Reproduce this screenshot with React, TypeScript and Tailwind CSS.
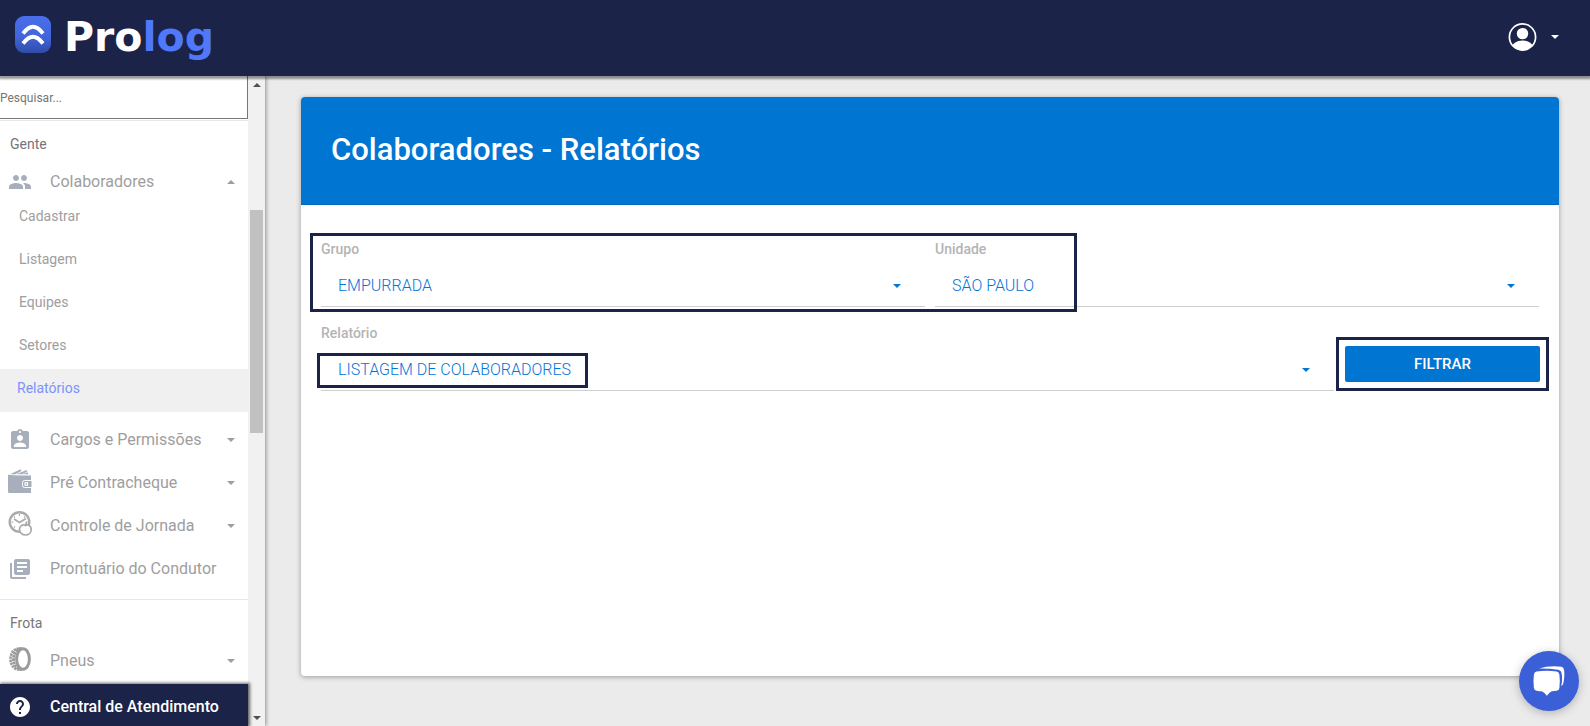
import type { ReactNode } from "react";
import { MdAssignmentInd, MdHelp, MdLibraryBooks, MdPeople } from "react-icons/md";

function Caret({ up = false, className = "" }: { up?: boolean; className?: string }) {
  return (
    <svg viewBox="0 0 8 4" className={`h-1 w-2 shrink-0 ${className}`} fill="currentColor" aria-hidden="true">
      {up ? <path d="M0 4 4 0l4 4z" /> : <path d="M0 0h8L4 4z" />}
    </svg>
  );
}

function LogoMark() {
  return (
    <svg viewBox="0 0 36 37" className="h-[37px] w-9" aria-hidden="true">
      <defs>
        <linearGradient id="mark" x1="0" y1="0" x2="0" y2="1">
          <stop offset="0" stopColor="#4a6fea" />
          <stop offset="0.55" stopColor="#4265dc" />
          <stop offset="1" stopColor="#304da8" />
        </linearGradient>
      </defs>
      <rect width="36" height="37" rx="9" fill="url(#mark)" />
      <g fill="none" stroke="#fff" strokeWidth="3.8">
        <path d="M8 17.500C15 8.500 21 8.500 28 17.500" />
        <path d="M8 27.500C15 18.500 21 18.500 28 27.500" />
      </g>
    </svg>
  );
}

function WalletIcon() {
  return (
    <svg viewBox="0 0 24 24" className="size-6" fill="#a7aebc" aria-hidden="true">
      <path d="M2 5.200 12.500 .3l1 1.700L7.500 5.200z" />
      <path d="M8.500 5.200 18.500 1l.8 1.500-5.300 2.700z" />
      <path d="M14.500 5.200 19.500 3.200l1 2z" />
      <path d="M0 5.500Q1 6.500 23 6.500V24H1.500Q0 24 0 22.500z" />
      <path d="M24 11.500h-7.500q-2 0-2 2v3q0 2 2 2H24z" stroke="#fff" />
      <rect x="16.500" y="13.200" width="3.600" height="3.600" fill="#fff" />
      <rect x="17.600" y="14.300" width="1.400" height="1.400" />
    </svg>
  );
}

function JourneyIcon() {
  return (
    <svg viewBox="0 0 24 25" className="h-[25px] w-6" fill="none" stroke="#ababab" aria-hidden="true">
      <circle cx="11.500" cy="11" r="9.800" strokeWidth="2.400" />
      <path d="M11.500 3v2M11.500 17v2M3.500 11h2M17.500 11h2M6 5.500l1 1M16 6.500l1-1M6 16.500l1-1" strokeWidth="1.200" />
      <path d="m6 8 5.500 3.500L18 7.500" strokeWidth="1.900" />
      <path d="M17.500 14.500c-2.500-1.500-6 0-6 4 0 3 2.500 5.500 6 5.500s5.700-2.500 5.700-5.500c0-4-3.200-5.500-5.700-4Z" fill="#fff" strokeWidth="1.700" />
      <path d="M17.500 14.500c0-1.500.5-2.500 1.500-3" strokeWidth="1.800" />
    </svg>
  );
}

function TireIcon() {
  return (
    <svg viewBox="0 0 22 24" className="ml-px h-6 w-[22px]" fill="none" stroke="#9b9b9b" aria-hidden="true">
      <path d="M13 1.500h-3C5 1.500 1.500 6 1.500 12s3.500 10.500 8.500 10.500h3" strokeWidth="2.600" strokeDasharray="2.300 .8" />
      <path d="M12 1.500C7.500 2.500 4.500 6.500 4.500 12s3 9.500 7.500 10.500" strokeWidth="3" strokeDasharray="2.700 .6" />
      <ellipse cx="14" cy="12" rx="6.400" ry="10.300" fill="#fff" strokeWidth="3" />
    </svg>
  );
}

function AccountIcon() {
  return (
    <svg viewBox="0 0 29 28" className="h-7 w-[29px]" aria-hidden="true">
      <defs>
        <clipPath id="disc">
          <circle cx="14.500" cy="14" r="13.500" />
        </clipPath>
      </defs>
      <circle cx="14.500" cy="14" r="13.100" fill="none" stroke="#fff" strokeWidth="1.700" />
      <circle cx="14.500" cy="10.600" r="5.700" fill="#fff" />
      <ellipse cx="14.500" cy="25" rx="11" ry="7.500" fill="#fff" clipPath="url(#disc)" />
    </svg>
  );
}

function ChatIcon() {
  return (
    <svg viewBox="0 0 32 30" className="h-[30px] w-8" aria-hidden="true">
      <path d="M6 2.600Q16-.6 28.500 .8q2.200.4 2.600 3.200.8 7-.8 13.500-.4 1.700-2 2.500 1.400-7 .3-12.500-.5-3.300-3.500-3.800Q16 2.500 6 2.600Z" fill="#fff" />
      <path d="M3.500 5.400q10-1.400 20.200 0 2.300.4 2.700 3 .9 7 0 13.600-.4 2.400-2.700 2.800-2.200.4-5 .5-2 .6-4.800 4.500Q11 26 8.700 25.300q-2.800 0-5-.5Q1.300 24.400.9 22 0 15.500.9 8.400q.4-2.600 2.600-3Z" fill="#fff" />
    </svg>
  );
}

function MenuRow({ icon, label, caret, tall = true }: { icon: ReactNode; label: string; caret?: "up" | "down"; tall?: boolean }) {
  return (
    <button type="button" className={`flex w-full items-center pr-[13px] pl-2 text-left text-base text-[#9e9e9e] ${tall ? "h-[43px]" : "h-[30px]"}`}>
      <span className="flex w-[42px] items-center text-[#a7aebc]">{icon}</span>
      <span className="flex-1">{label}</span>
      {caret && <Caret up={caret === "up"} />}
    </button>
  );
}

function Section({ title }: { title: string }) {
  return <h2 className="flex h-[46px] items-center pl-[10px] text-sm text-[#757575]">{title}</h2>;
}

function Field({ id, label, value, children }: { id: string; label: string; value: string; children?: ReactNode }) {
  return (
    <div className="min-w-0">
      <label htmlFor={id} className="block text-sm leading-5 font-medium text-[#b4b4b4]">
        {label}
      </label>
      <div className="relative mt-[6px] flex h-[42px] items-center border-b border-[#cfcfcf]">
        <select id={id} className="h-full w-full appearance-none bg-transparent pr-12 pl-[17px] text-base font-light text-[#0275d8] outline-none">
          <option>{value}</option>
        </select>
        <Caret className="pointer-events-none absolute right-6 text-[#0075d1]" />
        {children}
      </div>
    </div>
  );
}

const pages = ["Cadastrar", "Listagem", "Equipes", "Setores"];

export default function App() {
  return (
    <div className="flex h-screen flex-col overflow-hidden bg-[#ebebeb] font-[Roboto,sans-serif]">
      <header className="z-20 flex h-[76px] shrink-0 items-center justify-between bg-[#1b2349] pr-[31px] pl-[15px] shadow-[0_2px_2px_1px_rgba(0,0,0,0.4)]">
        <a href="#" className="flex items-center gap-[13px] pb-[7px]">
          <LogoMark />
          <span className="pt-1 font-[DejaVu_Sans,sans-serif] text-[41px] leading-[48px] font-bold text-white">
            Pro<span className="text-[#5078fa]">log</span>
          </span>
        </a>
        <button type="button" aria-label="Conta" className="flex items-center gap-[14px] pb-0.5 text-white">
          <AccountIcon />
          <Caret />
        </button>
      </header>

      <div className="flex min-h-0 flex-1">
        <aside className="z-10 flex w-[265px] shrink-0 bg-white shadow-[1px_0_4px_rgba(0,0,0,0.4)]">
          <div className="flex min-w-0 flex-1 flex-col">
            <div className="min-h-0 flex-1 overflow-hidden">
              <input
                type="search"
                aria-label="Pesquisar"
                placeholder="Pesquisar..."
                className="block h-[43px] w-full border-r border-b border-[#767676] pt-0.5 text-xs outline-none placeholder:text-[#757575]"
              />
              <nav className="mt-px border-t border-[#e8e8e8]">
                <Section title="Gente" />
                <MenuRow tall={false} icon={<MdPeople size={24} />} label="Colaboradores" caret="up" />
                <ul className="text-sm text-[#9e9e9e]">
                  {pages.map((page) => (
                    <li key={page}>
                      <a href="#" className="flex h-[43px] items-center pb-[6px] pl-[19px]">
                        {page}
                      </a>
                    </li>
                  ))}
                  <li>
                    <a href="#" className="flex h-[43px] items-center bg-[#f0f0f0] pb-[6px] pl-[17px] text-[#7b93fb]">
                      Relatórios
                    </a>
                  </li>
                </ul>
                <div className="mt-[6px] border-b border-[#e8e8e8] pb-[9px]">
                  <MenuRow icon={<MdAssignmentInd size={24} />} label="Cargos e Permissões" caret="down" />
                  <MenuRow icon={<span className="pb-1"><WalletIcon /></span>} label="Pré Contracheque" caret="down" />
                  <MenuRow icon={<span className="pb-1"><JourneyIcon /></span>} label="Controle de Jornada" caret="down" />
                  <MenuRow icon={<MdLibraryBooks size={24} />} label="Prontuário do Condutor" />
                </div>
                <Section title="Frota" />
                <MenuRow tall={false} icon={<span className="pb-1"><TireIcon /></span>} label="Pneus" caret="down" />
              </nav>
            </div>
            <a href="#" className="z-10 flex h-[42px] shrink-0 items-center bg-[#1b2349] pt-1 pl-2 text-base font-medium text-white shadow-[1px_0_3px_1px_rgba(0,0,0,0.6)]">
              <span className="w-[42px]">
                <MdHelp size={24} />
              </span>
              Central de Atendimento
            </a>
          </div>
          <div className="flex w-[17px] shrink-0 flex-col items-center bg-[#f1f1f1] pt-[7px] pb-[6px] text-[#505050]">
            <Caret up />
            <div className="flex min-h-0 w-full flex-1 flex-col items-center pt-[123px]">
              <div className="h-[223px] w-[13px] bg-[#c1c1c1]" />
            </div>
            <Caret />
          </div>
        </aside>

        <main className="flex min-w-0 flex-1 flex-col pt-[21px] pr-[31px] pb-[50px] pl-9">
          <section className="flex-1 rounded bg-white shadow-[0_1px_5px_rgba(0,0,0,0.35)]">
            <header className="flex h-[108px] items-center rounded-t border-b border-[#0069bd] bg-[#0075d1] px-[30px] pb-0.5">
              <h1 className="text-[31px] leading-10 font-medium text-white">Colaboradores - Relatórios</h1>
            </header>
            <form className="px-5 pt-[34px]">
              <div className="relative grid grid-cols-2 gap-[10px]">
                <Field id="grupo" label="Grupo" value="EMPURRADA" />
                <Field id="unidade" label="Unidade" value="SÃO PAULO" />
                <div className="pointer-events-none absolute -top-[6px] -bottom-[5px] -left-[11px] w-[63%] border-3 border-[#1b2349]" />
              </div>
              <div className="mt-4 -mr-px grid grid-cols-[1fr_195px] gap-[11px]">
                <Field id="relatorio" label="Relatório" value="LISTAGEM DE COLABORADORES">
                  <div className="pointer-events-none absolute top-1 -left-1 h-[35px] w-[271px] border-3 border-[#1b2349]" />
                </Field>
                <div className="relative pt-[23px]">
                  <button type="button" className="h-9 w-full rounded-xs bg-[#0075d1] text-[15px] font-medium text-white">
                    FILTRAR
                  </button>
                  <div className="pointer-events-none absolute -inset-x-[9px] top-[14px] h-[54px] border-3 border-[#1b2349]" />
                </div>
              </div>
            </form>
          </section>
        </main>
      </div>

      <button
        type="button"
        aria-label="Chat"
        className="fixed right-[11px] bottom-[15px] z-30 flex size-[60px] items-center justify-center rounded-full bg-[#3a5fd6] shadow-[0_2px_10px_rgba(0,0,0,0.25)]"
      >
        <ChatIcon />
      </button>
    </div>
  );
}
